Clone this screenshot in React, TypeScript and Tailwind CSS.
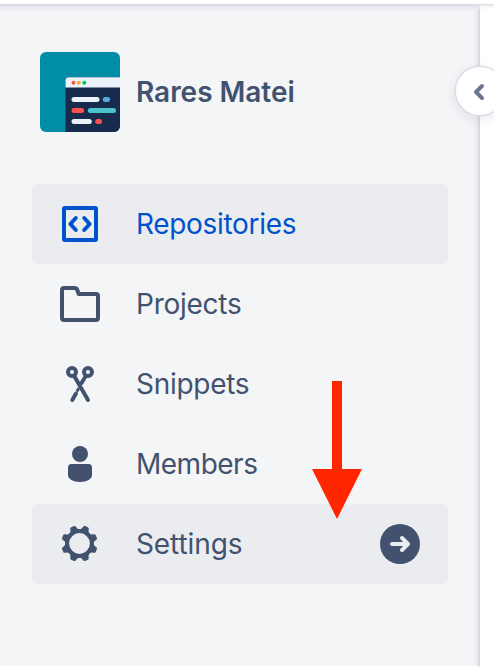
import type { ReactNode } from 'react';

function Avatar() {
  return (
    <svg className="h-20 w-20 rounded-md" viewBox="0 0 80 80">
      <rect width="80" height="80" fill="#008da6" />
      <path d="M25.5 81V28a3 3 0 0 1 3-3H81v56Z" fill="#172b4d" />
      <path d="M25.5 35.5V28.3a3 3 0 0 1 3-3H81v10.2Z" fill="#ebf2f9" />
      <circle cx="33.5" cy="30.8" r="2" fill="#ff5050" />
      <circle cx="38.8" cy="30.8" r="2" fill="#ffab2e" />
      <circle cx="44.3" cy="30.8" r="2" fill="#00c853" />
      <g strokeWidth="5" strokeLinecap="round">
        <path d="M34 47.6H57M34 69.5H49.3" stroke="#ebf2f9" />
        <path d="M65.3 47.6H67.6" stroke="#57a9e2" />
        <path d="M34 58.5H41.6M57.7 69.5H59.5" stroke="#ff5050" />
        <path d="M50.3 58.5H73.5" stroke="#4bc3c8" />
      </g>
    </svg>
  );
}

function Icon({ children }: { children: ReactNode }) {
  return (
    <svg
      className="h-12 w-12 shrink-0"
      viewBox="0 0 48 48"
      fill="none"
      stroke="currentColor"
      strokeWidth="4"
      strokeLinecap="round"
      strokeLinejoin="round"
    >
      {children}
    </svg>
  );
}

const icons = {
  code: (
    <Icon>
      <rect x="8" y="8" width="32" height="32" rx="1" />
      <path d="M19.8 18 14.4 24l5.4 6M28.2 18 33.6 24l-5.4 6" />
    </Icon>
  ),
  folder: (
    <Icon>
      <path d="M6 10q0-2 2-2h10.5q2 0 2.8 2l1.4 4H40q2 0 2 2v22q0 2-2 2H8q-2 0-2-2Z" />
    </Icon>
  ),
  scissors: (
    <Icon>
      <circle cx="16" cy="12" r="4" />
      <circle cx="32" cy="12" r="4" />
      <path d="M18.5 16.5 32 40M29.5 16.5 25.5 23M20 33.5 16.3 40" />
      <path d="m21.5 30.5.8-1.4" strokeWidth="3" />
    </Icon>
  ),
  person: (
    <Icon>
      <g fill="currentColor" stroke="none">
        <circle cx="24" cy="14" r="8" />
        <path d="M15.5 24h17a3.5 3.5 0 0 1 3.5 3.5V35c0 4-5 7-12 7s-12-3-12-7v-7.5a3.5 3.5 0 0 1 3.5-3.5Z" />
      </g>
    </Icon>
  ),
  gear: (
    <Icon>
      <g transform="translate(23.5 23.5)">
        <circle r="12.4" strokeWidth="4" />
        <g fill="currentColor" stroke="none">
          {[22.5, 67.5, 112.5, 157.5, 202.5, 247.5, 292.5, 337.5].map((angle) => (
            <path
              key={angle}
              transform={`rotate(${angle})`}
              d="M-5.5-12.5Q-3.4-14-3.2-16.2-3-18.2-1.6-18.2H1.6Q3-18.2 3.2-16.2 3.4-14 5.5-12.5Z"
            />
          ))}
        </g>
      </g>
    </Icon>
  ),
};

const items = [
  { label: 'Repositories', icon: icons.code, style: 'bg-[#ebecf0] text-[#0052cc]', spacing: 'tracking-[-0.32px]' },
  { label: 'Projects', icon: icons.folder, style: 'text-[#42526e]', spacing: 'tracking-[-0.25px]' },
  { label: 'Snippets', icon: icons.scissors, style: 'text-[#42526e]', spacing: 'tracking-[-0.28px]' },
  { label: 'Members', icon: icons.person, style: 'text-[#42526e]', spacing: 'tracking-[-0.5px]' },
  { label: 'Settings', icon: icons.gear, style: 'bg-[#ebecf0] text-[#42526e]', spacing: 'tracking-[-0.1px]', go: true },
];

export default function App() {
  return (
    <div className="relative flex h-[666px] w-[494px] flex-col overflow-hidden bg-white font-['Inter',sans-serif] text-[#42526e]">
      <div className="h-1 shrink-0 bg-white" />
      <div className="flex flex-1">
        <aside className="w-[480px] border-r-2 border-[#d9dadd] bg-[#f4f5f7] bg-linear-to-l from-[#e9eaed] to-[#f4f5f7] to-[5px] pt-12 pl-8">
          <header className="flex h-20 items-center gap-4 pl-2">
            <Avatar />
            <h1 className="text-[28px] leading-10 font-semibold tracking-[-0.03px] whitespace-nowrap">Rares Matei</h1>
          </header>
          <nav className="mt-[52px] w-[416px]">
            {items.map((item) => (
              <a key={item.label} className={`flex h-20 items-center rounded-md px-6 ${item.style}`}>
                {item.icon}
                <span className={`ml-8 flex-1 text-[28px] leading-10 ${item.spacing}`}>{item.label}</span>
                {item.go && (
                  <svg className="mr-1 h-10 w-10" viewBox="0 0 40 40">
                    <circle cx="20" cy="20" r="20" fill="#42526e" />
                    <path d="M12 20H28M22 14l6 6-6 6" fill="none" stroke="#ebecf0" strokeWidth="4" strokeLinecap="round" strokeLinejoin="round" />
                  </svg>
                )}
              </a>
            ))}
          </nav>
        </aside>
      </div>
      <div className="absolute top-1 left-0 h-2 w-[480px] bg-linear-to-b from-[#d5d7df] via-[#e7e8ed] via-35% to-transparent" />
      <div className="absolute top-1 left-[480px] h-1.5 w-[14px] bg-linear-to-b from-[#d5d7df] via-[#f4f4f7] via-35% to-transparent" />
      <button className="absolute top-[67px] left-[456px] flex h-12 w-12 items-center justify-center rounded-full bg-white text-[#6b778c] shadow-[0_0_0_1.5px_#dcdee6,0_4px_12px_2px_#091e4214]">
        <svg className="h-12 w-12" viewBox="0 0 48 48" fill="none" stroke="currentColor" strokeWidth="4" strokeLinecap="round" strokeLinejoin="round">
          <path d="m26 19-6 6 6 6" />
        </svg>
      </button>
      <svg className="absolute top-[381px] left-[312px] h-[138px] w-[50px]" viewBox="0 0 50 138">
        <path d="M20 0H30V88H50L25 138 0 88H20Z" fill="#ff2600" />
      </svg>
    </div>
  );
}
